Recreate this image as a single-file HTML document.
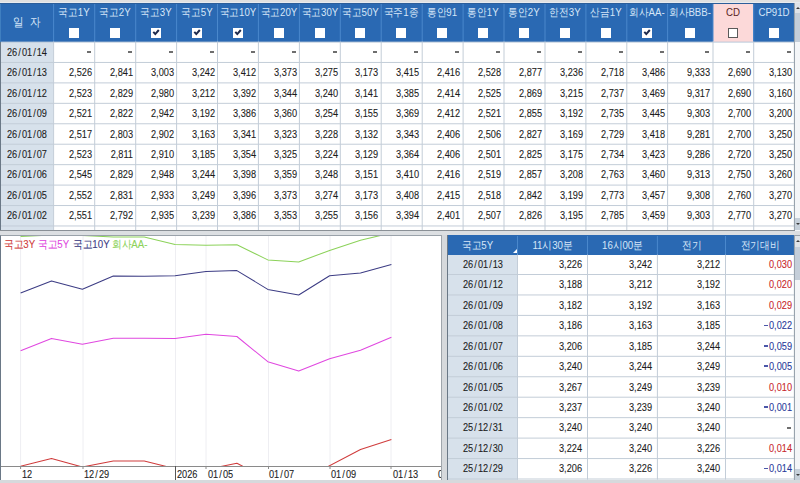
<!DOCTYPE html>
<html><head><meta charset="utf-8">
<style>
*{margin:0;padding:0;box-sizing:border-box}
html,body{width:800px;height:483px;overflow:hidden;background:#d8dbde;font-family:"Liberation Sans",sans-serif;}
.ab{position:absolute}
.t{position:absolute;white-space:nowrap;font-size:11.5px;line-height:12px;color:#1c1c1c;width:80px;-webkit-text-stroke:0.1px currentColor}
.r{text-align:right;transform:scaleX(0.8);transform-origin:100% 50%}
.c{text-align:center;transform:scaleX(0.8);transform-origin:50% 50%}
.t b{font-weight:normal;margin:0 1.3px}
.t i{display:inline-block;width:5.5px;height:1.6px;background:currentColor;vertical-align:3px;margin-right:1.2px;opacity:.85}
.h{position:absolute;white-space:nowrap;font-size:11px;line-height:12px;color:#d6e6f8;transform:scaleX(0.88);transform-origin:50% 50%;text-align:center}
.cb{position:absolute;width:10px;height:10px;background:#fff}
.d{position:absolute;width:4px;height:2px;background:#6e6e6e}
</style></head><body>

<div class="ab" style="left:0;top:0;width:800px;height:3px;background:#e0e0e0"></div>
<div class="ab" style="left:0;top:2px;width:800px;height:1px;background:#e8ebef"></div>
<div class="ab" style="left:0;top:3px;width:795px;height:228px;background:#fff"></div>
<div class="ab" style="left:0;top:42px;width:53px;height:188px;background:#d7e1eb"></div>
<div class="ab" style="left:0;top:3px;width:794px;height:39px;background:#2a69b3"></div>
<div class="ab" style="left:0;top:3px;width:794px;height:1px;background:#2c5e9a"></div>
<div class="ab" style="left:713px;top:4px;width:40px;height:38px;background:#fcd9d9"></div>
<svg class="ab" style="left:0;top:0" width="800" height="232"><rect x="53.10" y="4" width="1" height="37.6" fill="#4a88cc"/><rect x="53.10" y="41.6" width="1" height="188.6" fill="#c3cdd8"/><rect x="94.20" y="4" width="1" height="37.6" fill="#4a88cc"/><rect x="94.20" y="41.6" width="1" height="188.6" fill="#c3cdd8"/><rect x="135.20" y="4" width="1" height="37.6" fill="#4a88cc"/><rect x="135.20" y="41.6" width="1" height="188.6" fill="#c3cdd8"/><rect x="176.10" y="4" width="1" height="37.6" fill="#4a88cc"/><rect x="176.10" y="41.6" width="1" height="188.6" fill="#c3cdd8"/><rect x="217.00" y="4" width="1" height="37.6" fill="#4a88cc"/><rect x="217.00" y="41.6" width="1" height="188.6" fill="#c3cdd8"/><rect x="257.90" y="4" width="1" height="37.6" fill="#4a88cc"/><rect x="257.90" y="41.6" width="1" height="188.6" fill="#c3cdd8"/><rect x="298.90" y="4" width="1" height="37.6" fill="#4a88cc"/><rect x="298.90" y="41.6" width="1" height="188.6" fill="#c3cdd8"/><rect x="339.80" y="4" width="1" height="37.6" fill="#4a88cc"/><rect x="339.80" y="41.6" width="1" height="188.6" fill="#c3cdd8"/><rect x="380.70" y="4" width="1" height="37.6" fill="#4a88cc"/><rect x="380.70" y="41.6" width="1" height="188.6" fill="#c3cdd8"/><rect x="421.70" y="4" width="1" height="37.6" fill="#4a88cc"/><rect x="421.70" y="41.6" width="1" height="188.6" fill="#c3cdd8"/><rect x="462.60" y="4" width="1" height="37.6" fill="#4a88cc"/><rect x="462.60" y="41.6" width="1" height="188.6" fill="#c3cdd8"/><rect x="503.50" y="4" width="1" height="37.6" fill="#4a88cc"/><rect x="503.50" y="41.6" width="1" height="188.6" fill="#c3cdd8"/><rect x="544.50" y="4" width="1" height="37.6" fill="#4a88cc"/><rect x="544.50" y="41.6" width="1" height="188.6" fill="#c3cdd8"/><rect x="585.40" y="4" width="1" height="37.6" fill="#4a88cc"/><rect x="585.40" y="41.6" width="1" height="188.6" fill="#c3cdd8"/><rect x="626.30" y="4" width="1" height="37.6" fill="#4a88cc"/><rect x="626.30" y="41.6" width="1" height="188.6" fill="#c3cdd8"/><rect x="667.10" y="4" width="1" height="37.6" fill="#4a88cc"/><rect x="667.10" y="41.6" width="1" height="188.6" fill="#c3cdd8"/><rect x="712.50" y="4" width="1" height="37.6" fill="#4a88cc"/><rect x="712.50" y="41.6" width="1" height="188.6" fill="#c3cdd8"/><rect x="753.20" y="4" width="1" height="37.6" fill="#4a88cc"/><rect x="753.20" y="41.6" width="1" height="188.6" fill="#c3cdd8"/><rect x="0" y="61.95" width="794" height="1" fill="#c3cdd8"/><rect x="0" y="82.39" width="794" height="1" fill="#c3cdd8"/><rect x="0" y="102.83" width="794" height="1" fill="#c3cdd8"/><rect x="0" y="123.27" width="794" height="1" fill="#c3cdd8"/><rect x="0" y="143.71" width="794" height="1" fill="#c3cdd8"/><rect x="0" y="164.15" width="794" height="1" fill="#c3cdd8"/><rect x="0" y="184.59" width="794" height="1" fill="#c3cdd8"/><rect x="0" y="205.03" width="794" height="1" fill="#c3cdd8"/><rect x="0" y="225.47" width="794" height="1" fill="#c3cdd8"/><rect x="0" y="41.6" width="794" height="1" fill="#b9c9da"/><rect x="793.9" y="3" width="1" height="228" fill="#8e99a5"/></svg>
<div class="ab" style="left:0;top:42px;width:1px;height:189px;background:#6a7886"></div>
<div class="ab" style="left:0;top:4px;width:1px;height:38px;background:#3f7fc0"></div>
<div class="ab" style="left:0;top:230px;width:800px;height:1px;background:#8a9096"></div>
<div class="h" style="left:12px;top:15.5px;width:12px;font-size:11.5px">일</div>
<div class="h" style="left:29px;top:15.5px;width:12px;font-size:11.5px">자</div>
<div class="h" style="left:44px;top:6px;width:60px;color:#d6e6f8">국고1Y</div>
<div class="cb" style="left:69px;top:28px;"></div>
<div class="h" style="left:85px;top:6px;width:60px;color:#d6e6f8">국고2Y</div>
<div class="cb" style="left:110px;top:28px;"></div>
<div class="h" style="left:126px;top:6px;width:60px;color:#d6e6f8">국고3Y</div>
<div class="cb" style="left:151px;top:28px;"></div>
<svg class="ab" style="left:151px;top:28px" width="10" height="10" viewBox="0 0 10 10"><path d="M2.3 3.9 L4.3 6.1 L7.8 2" stroke="#1d2a4d" stroke-width="2" fill="none"/></svg>
<div class="h" style="left:167px;top:6px;width:60px;color:#d6e6f8">국고5Y</div>
<div class="cb" style="left:192px;top:28px;"></div>
<svg class="ab" style="left:192px;top:28px" width="10" height="10" viewBox="0 0 10 10"><path d="M2.3 3.9 L4.3 6.1 L7.8 2" stroke="#1d2a4d" stroke-width="2" fill="none"/></svg>
<div class="h" style="left:208px;top:6px;width:60px;color:#d6e6f8">국고10Y</div>
<div class="cb" style="left:233px;top:28px;"></div>
<svg class="ab" style="left:233px;top:28px" width="10" height="10" viewBox="0 0 10 10"><path d="M2.3 3.9 L4.3 6.1 L7.8 2" stroke="#1d2a4d" stroke-width="2" fill="none"/></svg>
<div class="h" style="left:249px;top:6px;width:60px;color:#d6e6f8">국고20Y</div>
<div class="cb" style="left:274px;top:28px;"></div>
<div class="h" style="left:290px;top:6px;width:60px;color:#d6e6f8">국고30Y</div>
<div class="cb" style="left:315px;top:28px;"></div>
<div class="h" style="left:331px;top:6px;width:59px;color:#d6e6f8">국고50Y</div>
<div class="cb" style="left:355px;top:28px;"></div>
<div class="h" style="left:371px;top:6px;width:60px;color:#d6e6f8">국주1종</div>
<div class="cb" style="left:396px;top:28px;"></div>
<div class="h" style="left:412px;top:6px;width:60px;color:#d6e6f8">통안91</div>
<div class="cb" style="left:437px;top:28px;"></div>
<div class="h" style="left:453px;top:6px;width:60px;color:#d6e6f8">통안1Y</div>
<div class="cb" style="left:478px;top:28px;"></div>
<div class="h" style="left:494px;top:6px;width:60px;color:#d6e6f8">통안2Y</div>
<div class="cb" style="left:519px;top:28px;"></div>
<div class="h" style="left:535px;top:6px;width:60px;color:#d6e6f8">한전3Y</div>
<div class="cb" style="left:560px;top:28px;"></div>
<div class="h" style="left:576px;top:6px;width:60px;color:#d6e6f8">산금1Y</div>
<div class="cb" style="left:601px;top:28px;"></div>
<div class="h" style="left:617px;top:6px;width:60px;color:#d6e6f8">회사AA-</div>
<div class="cb" style="left:642px;top:28px;"></div>
<svg class="ab" style="left:642px;top:28px" width="10" height="10" viewBox="0 0 10 10"><path d="M2.3 3.9 L4.3 6.1 L7.8 2" stroke="#1d2a4d" stroke-width="2" fill="none"/></svg>
<div class="h" style="left:658px;top:6px;width:64px;color:#d6e6f8">회사BBB-</div>
<div class="cb" style="left:685px;top:28px;"></div>
<div class="h" style="left:703px;top:6px;width:60px;color:#5a2525">CD</div>
<div class="cb" style="left:728px;top:28px;border:1px solid #5a5a5a;"></div>
<div class="h" style="left:744px;top:6px;width:60px;color:#d6e6f8">CP91D</div>
<div class="cb" style="left:769px;top:28px;"></div>
<div class="t c" style="left:-13px;top:45.5px">26<b>/</b>01<b>/</b>14</div>
<div class="d" style="left:87px;top:51px"></div>
<div class="d" style="left:128px;top:51px"></div>
<div class="d" style="left:169px;top:51px"></div>
<div class="d" style="left:210px;top:51px"></div>
<div class="d" style="left:251px;top:51px"></div>
<div class="d" style="left:292px;top:51px"></div>
<div class="d" style="left:333px;top:51px"></div>
<div class="d" style="left:373px;top:51px"></div>
<div class="d" style="left:414px;top:51px"></div>
<div class="d" style="left:455px;top:51px"></div>
<div class="d" style="left:496px;top:51px"></div>
<div class="d" style="left:537px;top:51px"></div>
<div class="d" style="left:578px;top:51px"></div>
<div class="d" style="left:619px;top:51px"></div>
<div class="d" style="left:660px;top:51px"></div>
<div class="d" style="left:705px;top:51px"></div>
<div class="d" style="left:746px;top:51px"></div>
<div class="d" style="left:787px;top:51px"></div>
<div class="t c" style="left:-13px;top:66.2px">26<b>/</b>01<b>/</b>13</div>
<div class="t r" style="left:12px;top:66.2px">2,526</div>
<div class="t r" style="left:53px;top:66.2px">2,841</div>
<div class="t r" style="left:94px;top:66.2px">3,003</div>
<div class="t r" style="left:135px;top:66.2px">3,242</div>
<div class="t r" style="left:176px;top:66.2px">3,412</div>
<div class="t r" style="left:217px;top:66.2px">3,373</div>
<div class="t r" style="left:258px;top:66.2px">3,275</div>
<div class="t r" style="left:298px;top:66.2px">3,173</div>
<div class="t r" style="left:339px;top:66.2px">3,415</div>
<div class="t r" style="left:380px;top:66.2px">2,416</div>
<div class="t r" style="left:421px;top:66.2px">2,528</div>
<div class="t r" style="left:462px;top:66.2px">2,877</div>
<div class="t r" style="left:503px;top:66.2px">3,236</div>
<div class="t r" style="left:544px;top:66.2px">2,718</div>
<div class="t r" style="left:585px;top:66.2px">3,486</div>
<div class="t r" style="left:630px;top:66.2px">9,333</div>
<div class="t r" style="left:671px;top:66.2px">2,690</div>
<div class="t r" style="left:712px;top:66.2px">3,130</div>
<div class="t c" style="left:-13px;top:86.6px">26<b>/</b>01<b>/</b>12</div>
<div class="t r" style="left:12px;top:86.6px">2,523</div>
<div class="t r" style="left:53px;top:86.6px">2,829</div>
<div class="t r" style="left:94px;top:86.6px">2,980</div>
<div class="t r" style="left:135px;top:86.6px">3,212</div>
<div class="t r" style="left:176px;top:86.6px">3,392</div>
<div class="t r" style="left:217px;top:86.6px">3,344</div>
<div class="t r" style="left:258px;top:86.6px">3,240</div>
<div class="t r" style="left:298px;top:86.6px">3,141</div>
<div class="t r" style="left:339px;top:86.6px">3,385</div>
<div class="t r" style="left:380px;top:86.6px">2,414</div>
<div class="t r" style="left:421px;top:86.6px">2,525</div>
<div class="t r" style="left:462px;top:86.6px">2,869</div>
<div class="t r" style="left:503px;top:86.6px">3,215</div>
<div class="t r" style="left:544px;top:86.6px">2,737</div>
<div class="t r" style="left:585px;top:86.6px">3,469</div>
<div class="t r" style="left:630px;top:86.6px">9,317</div>
<div class="t r" style="left:671px;top:86.6px">2,690</div>
<div class="t r" style="left:712px;top:86.6px">3,160</div>
<div class="t c" style="left:-13px;top:107.1px">26<b>/</b>01<b>/</b>09</div>
<div class="t r" style="left:12px;top:107.1px">2,521</div>
<div class="t r" style="left:53px;top:107.1px">2,822</div>
<div class="t r" style="left:94px;top:107.1px">2,942</div>
<div class="t r" style="left:135px;top:107.1px">3,192</div>
<div class="t r" style="left:176px;top:107.1px">3,386</div>
<div class="t r" style="left:217px;top:107.1px">3,360</div>
<div class="t r" style="left:258px;top:107.1px">3,254</div>
<div class="t r" style="left:298px;top:107.1px">3,155</div>
<div class="t r" style="left:339px;top:107.1px">3,369</div>
<div class="t r" style="left:380px;top:107.1px">2,412</div>
<div class="t r" style="left:421px;top:107.1px">2,521</div>
<div class="t r" style="left:462px;top:107.1px">2,855</div>
<div class="t r" style="left:503px;top:107.1px">3,192</div>
<div class="t r" style="left:544px;top:107.1px">2,735</div>
<div class="t r" style="left:585px;top:107.1px">3,445</div>
<div class="t r" style="left:630px;top:107.1px">9,303</div>
<div class="t r" style="left:671px;top:107.1px">2,700</div>
<div class="t r" style="left:712px;top:107.1px">3,200</div>
<div class="t c" style="left:-13px;top:127.5px">26<b>/</b>01<b>/</b>08</div>
<div class="t r" style="left:12px;top:127.5px">2,517</div>
<div class="t r" style="left:53px;top:127.5px">2,803</div>
<div class="t r" style="left:94px;top:127.5px">2,902</div>
<div class="t r" style="left:135px;top:127.5px">3,163</div>
<div class="t r" style="left:176px;top:127.5px">3,341</div>
<div class="t r" style="left:217px;top:127.5px">3,323</div>
<div class="t r" style="left:258px;top:127.5px">3,228</div>
<div class="t r" style="left:298px;top:127.5px">3,132</div>
<div class="t r" style="left:339px;top:127.5px">3,343</div>
<div class="t r" style="left:380px;top:127.5px">2,406</div>
<div class="t r" style="left:421px;top:127.5px">2,506</div>
<div class="t r" style="left:462px;top:127.5px">2,827</div>
<div class="t r" style="left:503px;top:127.5px">3,169</div>
<div class="t r" style="left:544px;top:127.5px">2,729</div>
<div class="t r" style="left:585px;top:127.5px">3,418</div>
<div class="t r" style="left:630px;top:127.5px">9,281</div>
<div class="t r" style="left:671px;top:127.5px">2,700</div>
<div class="t r" style="left:712px;top:127.5px">3,250</div>
<div class="t c" style="left:-13px;top:147.9px">26<b>/</b>01<b>/</b>07</div>
<div class="t r" style="left:12px;top:147.9px">2,523</div>
<div class="t r" style="left:53px;top:147.9px">2,811</div>
<div class="t r" style="left:94px;top:147.9px">2,910</div>
<div class="t r" style="left:135px;top:147.9px">3,185</div>
<div class="t r" style="left:176px;top:147.9px">3,354</div>
<div class="t r" style="left:217px;top:147.9px">3,325</div>
<div class="t r" style="left:258px;top:147.9px">3,224</div>
<div class="t r" style="left:298px;top:147.9px">3,129</div>
<div class="t r" style="left:339px;top:147.9px">3,364</div>
<div class="t r" style="left:380px;top:147.9px">2,406</div>
<div class="t r" style="left:421px;top:147.9px">2,501</div>
<div class="t r" style="left:462px;top:147.9px">2,825</div>
<div class="t r" style="left:503px;top:147.9px">3,175</div>
<div class="t r" style="left:544px;top:147.9px">2,734</div>
<div class="t r" style="left:585px;top:147.9px">3,423</div>
<div class="t r" style="left:630px;top:147.9px">9,286</div>
<div class="t r" style="left:671px;top:147.9px">2,720</div>
<div class="t r" style="left:712px;top:147.9px">3,250</div>
<div class="t c" style="left:-13px;top:168.4px">26<b>/</b>01<b>/</b>06</div>
<div class="t r" style="left:12px;top:168.4px">2,545</div>
<div class="t r" style="left:53px;top:168.4px">2,829</div>
<div class="t r" style="left:94px;top:168.4px">2,948</div>
<div class="t r" style="left:135px;top:168.4px">3,244</div>
<div class="t r" style="left:176px;top:168.4px">3,398</div>
<div class="t r" style="left:217px;top:168.4px">3,359</div>
<div class="t r" style="left:258px;top:168.4px">3,248</div>
<div class="t r" style="left:298px;top:168.4px">3,151</div>
<div class="t r" style="left:339px;top:168.4px">3,410</div>
<div class="t r" style="left:380px;top:168.4px">2,416</div>
<div class="t r" style="left:421px;top:168.4px">2,519</div>
<div class="t r" style="left:462px;top:168.4px">2,857</div>
<div class="t r" style="left:503px;top:168.4px">3,208</div>
<div class="t r" style="left:544px;top:168.4px">2,763</div>
<div class="t r" style="left:585px;top:168.4px">3,460</div>
<div class="t r" style="left:630px;top:168.4px">9,313</div>
<div class="t r" style="left:671px;top:168.4px">2,750</div>
<div class="t r" style="left:712px;top:168.4px">3,260</div>
<div class="t c" style="left:-13px;top:188.8px">26<b>/</b>01<b>/</b>05</div>
<div class="t r" style="left:12px;top:188.8px">2,552</div>
<div class="t r" style="left:53px;top:188.8px">2,831</div>
<div class="t r" style="left:94px;top:188.8px">2,933</div>
<div class="t r" style="left:135px;top:188.8px">3,249</div>
<div class="t r" style="left:176px;top:188.8px">3,396</div>
<div class="t r" style="left:217px;top:188.8px">3,373</div>
<div class="t r" style="left:258px;top:188.8px">3,274</div>
<div class="t r" style="left:298px;top:188.8px">3,173</div>
<div class="t r" style="left:339px;top:188.8px">3,408</div>
<div class="t r" style="left:380px;top:188.8px">2,415</div>
<div class="t r" style="left:421px;top:188.8px">2,518</div>
<div class="t r" style="left:462px;top:188.8px">2,842</div>
<div class="t r" style="left:503px;top:188.8px">3,199</div>
<div class="t r" style="left:544px;top:188.8px">2,773</div>
<div class="t r" style="left:585px;top:188.8px">3,457</div>
<div class="t r" style="left:630px;top:188.8px">9,308</div>
<div class="t r" style="left:671px;top:188.8px">2,760</div>
<div class="t r" style="left:712px;top:188.8px">3,270</div>
<div class="t c" style="left:-13px;top:209.3px">26<b>/</b>01<b>/</b>02</div>
<div class="t r" style="left:12px;top:209.3px">2,551</div>
<div class="t r" style="left:53px;top:209.3px">2,792</div>
<div class="t r" style="left:94px;top:209.3px">2,935</div>
<div class="t r" style="left:135px;top:209.3px">3,239</div>
<div class="t r" style="left:176px;top:209.3px">3,386</div>
<div class="t r" style="left:217px;top:209.3px">3,353</div>
<div class="t r" style="left:258px;top:209.3px">3,255</div>
<div class="t r" style="left:298px;top:209.3px">3,156</div>
<div class="t r" style="left:339px;top:209.3px">3,394</div>
<div class="t r" style="left:380px;top:209.3px">2,401</div>
<div class="t r" style="left:421px;top:209.3px">2,507</div>
<div class="t r" style="left:462px;top:209.3px">2,826</div>
<div class="t r" style="left:503px;top:209.3px">3,195</div>
<div class="t r" style="left:544px;top:209.3px">2,785</div>
<div class="t r" style="left:585px;top:209.3px">3,459</div>
<div class="t r" style="left:630px;top:209.3px">9,303</div>
<div class="t r" style="left:671px;top:209.3px">2,770</div>
<div class="t r" style="left:712px;top:209.3px">3,270</div>
<div class="ab" style="left:795px;top:3px;width:5px;height:228px;background:#f4f6f8"></div>
<div class="ab" style="left:795px;top:3px;width:5px;height:10px;background:#dfe3e8"></div>
<svg class="ab" style="left:796px;top:6px" width="4" height="4"><path d="M0 3 L2 1 L4 3Z" fill="#3a3a3a"/></svg>
<div class="ab" style="left:795px;top:13px;width:5px;height:29px;background:#c4ced9"></div>
<div class="ab" style="left:795px;top:218px;width:5px;height:12px;background:#c6d0da"></div>
<svg class="ab" style="left:796px;top:222px" width="4" height="4"><path d="M0 1 L2 3 L4 1Z" fill="#3a3a3a"/></svg>
<div class="ab" style="left:0;top:231px;width:800px;height:4px;background:#dcdfe2"></div>
<div class="ab" style="left:0;top:235px;width:442px;height:246px;background:#fff;border-top:1px solid #9aa2aa;border-left:1px solid #6a7886;border-right:1px solid #a0a6ac;border-bottom:1px solid #a0a6ac"></div>
<svg class="ab" style="left:0;top:0" width="442" height="483" viewBox="0 0 442 483"><defs><clipPath id="cp"><rect x="1" y="236" width="440" height="230"/></clipPath></defs><line x1="20.6" y1="236" x2="20.6" y2="466" stroke="#eeeef2" stroke-width="1"/><line x1="83.0" y1="236" x2="83.0" y2="466" stroke="#eeeef2" stroke-width="1"/><line x1="175.5" y1="236" x2="175.5" y2="466" stroke="#eeeef2" stroke-width="1"/><line x1="206.0" y1="236" x2="206.0" y2="466" stroke="#eeeef2" stroke-width="1"/><line x1="268.5" y1="236" x2="268.5" y2="466" stroke="#eeeef2" stroke-width="1"/><line x1="330.0" y1="236" x2="330.0" y2="466" stroke="#eeeef2" stroke-width="1"/><line x1="391.0" y1="236" x2="391.0" y2="466" stroke="#eeeef2" stroke-width="1"/><g clip-path="url(#cp)" fill="none" stroke-width="1.05" stroke-linejoin="round"><polyline points="20.6,236.5 51.5,235.0 82.4,235.5 113.3,237.0 144.2,237.0 175.1,244.4 206.0,245.3 236.9,244.7 267.8,259.9 298.7,262.0 329.6,250.4 360.5,240.2 391.4,232.9" stroke="#8cd25a"/><polyline points="20.6,293.0 51.5,281.1 82.4,289.2 113.3,276.0 144.2,276.3 175.1,275.7 206.0,271.4 236.9,270.6 267.8,289.4 298.7,295.0 329.6,275.7 360.5,273.1 391.4,264.6" stroke="#3c3c84"/><polyline points="20.6,350.8 51.5,338.4 82.4,344.2 113.3,338.2 144.2,338.2 175.1,338.6 206.0,334.3 236.9,336.5 267.8,361.7 298.7,371.1 329.6,358.7 360.5,350.2 391.4,337.3" stroke="#e048e0"/><polyline points="20.6,466.2 51.5,458.6 82.4,467.0 113.3,461.0 144.2,461.0 175.1,468.7 206.0,469.6 236.9,463.2 267.8,479.4 298.7,482.8 329.6,465.7 360.5,449.5 391.4,439.6" stroke="#d03c3c"/></g><line x1="1" y1="466.5" x2="441" y2="466.5" stroke="#8a8a8a" stroke-width="1"/><line x1="20.6" y1="466" x2="20.6" y2="469" stroke="#8a8a8a" stroke-width="1"/><line x1="83.0" y1="466" x2="83.0" y2="469" stroke="#8a8a8a" stroke-width="1"/><line x1="206.0" y1="466" x2="206.0" y2="469" stroke="#8a8a8a" stroke-width="1"/><line x1="268.5" y1="466" x2="268.5" y2="469" stroke="#8a8a8a" stroke-width="1"/><line x1="330.0" y1="466" x2="330.0" y2="469" stroke="#8a8a8a" stroke-width="1"/><line x1="391.0" y1="466" x2="391.0" y2="469" stroke="#8a8a8a" stroke-width="1"/><line x1="175.5" y1="466" x2="175.5" y2="480" stroke="#555" stroke-width="1"/></svg>
<div class="t" style="left:22.0px;top:467.5px;transform:scaleX(0.8);transform-origin:0 50%">12</div>
<div class="t" style="left:84.0px;top:467.5px;transform:scaleX(0.8);transform-origin:0 50%">12<b>/</b>29</div>
<div class="t" style="left:176.5px;top:467.5px;transform:scaleX(0.8);transform-origin:0 50%">2026</div>
<div class="t" style="left:207.5px;top:467.5px;transform:scaleX(0.8);transform-origin:0 50%">01<b>/</b>05</div>
<div class="t" style="left:269.0px;top:467.5px;transform:scaleX(0.8);transform-origin:0 50%">01<b>/</b>07</div>
<div class="t" style="left:330.5px;top:467.5px;transform:scaleX(0.8);transform-origin:0 50%">01<b>/</b>09</div>
<div class="t" style="left:392.5px;top:467.5px;transform:scaleX(0.8);transform-origin:0 50%">01<b>/</b>13</div>
<div class="t" style="left:437.5px;top:467.5px;transform:scaleX(0.8);transform-origin:0 50%">0</div>
<div class="ab" style="left:441px;top:235px;width:6px;height:248px;background:#d6d9dc;border-left:1px solid #a0a6ac"></div>
<div class="t" style="left:4px;top:237.5px;color:#d03c3c;font-size:11px;transform:scaleX(0.88);transform-origin:0 50%">국고3Y</div>
<div class="t" style="left:38px;top:237.5px;color:#e048e0;font-size:11px;transform:scaleX(0.88);transform-origin:0 50%">국고5Y</div>
<div class="t" style="left:73px;top:237.5px;color:#3c3c84;font-size:11px;transform:scaleX(0.88);transform-origin:0 50%">국고10Y</div>
<div class="t" style="left:112px;top:237.5px;color:#8cd25a;font-size:11px;transform:scaleX(0.88);transform-origin:0 50%">회사AA-</div>
<div class="ab" style="left:447px;top:235px;width:353px;height:245px;background:#fff"></div>
<div class="ab" style="left:448px;top:255px;width:70px;height:225px;background:#d7e1eb"></div>
<div class="ab" style="left:447px;top:235px;width:347px;height:20px;background:#2a69b3"></div>
<svg class="ab" style="left:440px;top:230px" width="360" height="253" viewBox="440 230 360 253"><rect x="517.00" y="236" width="1" height="18.6" fill="#4a88cc"/><rect x="517.00" y="254.6" width="1" height="225" fill="#c3cdd8"/><rect x="587.00" y="236" width="1" height="18.6" fill="#4a88cc"/><rect x="587.00" y="254.6" width="1" height="225" fill="#c3cdd8"/><rect x="656.90" y="236" width="1" height="18.6" fill="#4a88cc"/><rect x="656.90" y="254.6" width="1" height="225" fill="#c3cdd8"/><rect x="725.00" y="236" width="1" height="18.6" fill="#4a88cc"/><rect x="725.00" y="254.6" width="1" height="225" fill="#c3cdd8"/><rect x="447" y="274.00" width="347" height="1" fill="#c3cdd8"/><rect x="447" y="294.45" width="347" height="1" fill="#c3cdd8"/><rect x="447" y="314.90" width="347" height="1" fill="#c3cdd8"/><rect x="447" y="335.35" width="347" height="1" fill="#c3cdd8"/><rect x="447" y="355.80" width="347" height="1" fill="#c3cdd8"/><rect x="447" y="376.25" width="347" height="1" fill="#c3cdd8"/><rect x="447" y="396.70" width="347" height="1" fill="#c3cdd8"/><rect x="447" y="417.15" width="347" height="1" fill="#c3cdd8"/><rect x="447" y="437.60" width="347" height="1" fill="#c3cdd8"/><rect x="447" y="458.05" width="347" height="1" fill="#c3cdd8"/><rect x="447" y="478.50" width="347" height="1" fill="#c3cdd8"/><rect x="793.9" y="235" width="1" height="245" fill="#8e99a5"/></svg>
<div class="ab" style="left:447px;top:235px;width:1px;height:245px;background:#6a7886"></div>
<div class="h" style="left:443px;top:238.5px;width:69px">국고5Y</div>
<div class="h" style="left:518px;top:238.5px;width:69px">11시30분</div>
<div class="h" style="left:588px;top:238.5px;width:69px">16시00분</div>
<div class="h" style="left:658px;top:238.5px;width:67px">전기</div>
<div class="h" style="left:726px;top:238.5px;width:68px">전기대비</div>
<svg class="ab" style="left:513px;top:249px" width="4" height="4"><path d="M4 0 L4 4 L0 4 Z" fill="#fff"/></svg>
<div class="t c" style="left:443px;top:258.1px">26<b>/</b>01<b>/</b>13</div>
<div class="t r" style="left:502px;top:258.1px;color:#1c1c1c">3,226</div>
<div class="t r" style="left:572px;top:258.1px;color:#1c1c1c">3,242</div>
<div class="t r" style="left:640px;top:258.1px;color:#1c1c1c">3,212</div>
<div class="t r" style="left:712px;top:258.1px;color:#c8282d">0,030</div>
<div class="t c" style="left:443px;top:278.2px">26<b>/</b>01<b>/</b>12</div>
<div class="t r" style="left:502px;top:278.2px;color:#1c1c1c">3,188</div>
<div class="t r" style="left:572px;top:278.2px;color:#1c1c1c">3,212</div>
<div class="t r" style="left:640px;top:278.2px;color:#1c1c1c">3,192</div>
<div class="t r" style="left:712px;top:278.2px;color:#c8282d">0,020</div>
<div class="t c" style="left:443px;top:298.7px">26<b>/</b>01<b>/</b>09</div>
<div class="t r" style="left:502px;top:298.7px;color:#1c1c1c">3,182</div>
<div class="t r" style="left:572px;top:298.7px;color:#1c1c1c">3,192</div>
<div class="t r" style="left:640px;top:298.7px;color:#1c1c1c">3,163</div>
<div class="t r" style="left:712px;top:298.7px;color:#c8282d">0,029</div>
<div class="t c" style="left:443px;top:319.1px">26<b>/</b>01<b>/</b>08</div>
<div class="t r" style="left:502px;top:319.1px;color:#1c1c1c">3,186</div>
<div class="t r" style="left:572px;top:319.1px;color:#1c1c1c">3,163</div>
<div class="t r" style="left:640px;top:319.1px;color:#1c1c1c">3,185</div>
<div class="t r" style="left:712px;top:319.1px;color:#2a3a9a"><i></i>0,022</div>
<div class="t c" style="left:443px;top:339.6px">26<b>/</b>01<b>/</b>07</div>
<div class="t r" style="left:502px;top:339.6px;color:#1c1c1c">3,206</div>
<div class="t r" style="left:572px;top:339.6px;color:#1c1c1c">3,185</div>
<div class="t r" style="left:640px;top:339.6px;color:#1c1c1c">3,244</div>
<div class="t r" style="left:712px;top:339.6px;color:#2a3a9a"><i></i>0,059</div>
<div class="t c" style="left:443px;top:360.0px">26<b>/</b>01<b>/</b>06</div>
<div class="t r" style="left:502px;top:360.0px;color:#1c1c1c">3,240</div>
<div class="t r" style="left:572px;top:360.0px;color:#1c1c1c">3,244</div>
<div class="t r" style="left:640px;top:360.0px;color:#1c1c1c">3,249</div>
<div class="t r" style="left:712px;top:360.0px;color:#2a3a9a"><i></i>0,005</div>
<div class="t c" style="left:443px;top:380.5px">26<b>/</b>01<b>/</b>05</div>
<div class="t r" style="left:502px;top:380.5px;color:#1c1c1c">3,267</div>
<div class="t r" style="left:572px;top:380.5px;color:#1c1c1c">3,249</div>
<div class="t r" style="left:640px;top:380.5px;color:#1c1c1c">3,239</div>
<div class="t r" style="left:712px;top:380.5px;color:#c8282d">0,010</div>
<div class="t c" style="left:443px;top:400.9px">26<b>/</b>01<b>/</b>02</div>
<div class="t r" style="left:502px;top:400.9px;color:#1c1c1c">3,237</div>
<div class="t r" style="left:572px;top:400.9px;color:#1c1c1c">3,239</div>
<div class="t r" style="left:640px;top:400.9px;color:#1c1c1c">3,240</div>
<div class="t r" style="left:712px;top:400.9px;color:#2a3a9a"><i></i>0,001</div>
<div class="t c" style="left:443px;top:421.4px">25<b>/</b>12<b>/</b>31</div>
<div class="t r" style="left:502px;top:421.4px;color:#1c1c1c">3,240</div>
<div class="t r" style="left:572px;top:421.4px;color:#1c1c1c">3,240</div>
<div class="t r" style="left:640px;top:421.4px;color:#1c1c1c">3,240</div>
<div class="d" style="left:787px;top:427px"></div>
<div class="t c" style="left:443px;top:441.8px">25<b>/</b>12<b>/</b>30</div>
<div class="t r" style="left:502px;top:441.8px;color:#1c1c1c">3,224</div>
<div class="t r" style="left:572px;top:441.8px;color:#1c1c1c">3,240</div>
<div class="t r" style="left:640px;top:441.8px;color:#1c1c1c">3,226</div>
<div class="t r" style="left:712px;top:441.8px;color:#c8282d">0,014</div>
<div class="t c" style="left:443px;top:462.3px">25<b>/</b>12<b>/</b>29</div>
<div class="t r" style="left:502px;top:462.3px;color:#1c1c1c">3,206</div>
<div class="t r" style="left:572px;top:462.3px;color:#1c1c1c">3,226</div>
<div class="t r" style="left:640px;top:462.3px;color:#1c1c1c">3,240</div>
<div class="t r" style="left:712px;top:462.3px;color:#2a3a9a"><i></i>0,014</div>
<div class="ab" style="left:795px;top:235px;width:5px;height:245px;background:#f4f6f8;border-top:1px solid #9aa2aa"></div>
<div class="ab" style="left:795px;top:236px;width:5px;height:11px;background:#dfe3e8"></div>
<svg class="ab" style="left:796px;top:239px" width="4" height="4"><path d="M0 3 L2 1 L4 3Z" fill="#3a3a3a"/></svg>
<div class="ab" style="left:795px;top:247px;width:5px;height:33px;background:#c4ced9"></div>
<div class="ab" style="left:795px;top:469px;width:5px;height:11px;background:#c6d0da"></div>
<svg class="ab" style="left:796px;top:473px" width="4" height="4"><path d="M0 1 L2 3 L4 1Z" fill="#3a3a3a"/></svg>
<div class="ab" style="left:0;top:480px;width:800px;height:3px;background:#d6d9dc"></div>
</body></html>
